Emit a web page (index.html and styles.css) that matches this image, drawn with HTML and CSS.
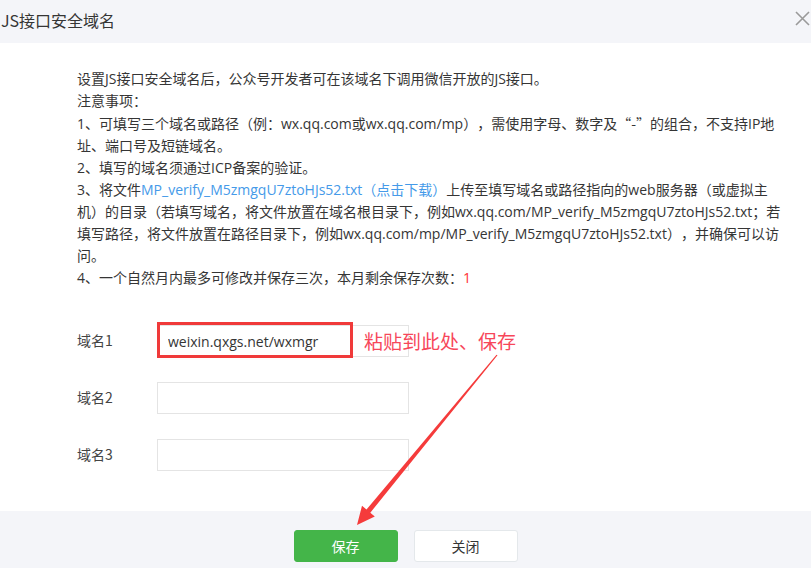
FILE: index.html
```html
<!DOCTYPE html>
<html lang="zh-CN">
<head>
<meta charset="utf-8">
<title>JS接口安全域名</title>
<link rel="stylesheet" href="styles.css">
</head>
<body>
<div class="dialog">
  <div class="dlg-head">
    <h3 class="dlg-title">JS接口安全域名</h3>
    <button class="dlg-close" type="button" aria-label="关闭">
      <svg width="15" height="15" viewBox="0 0 15 15"><path d="M1 1 L14 14 M14 1 L1 14" stroke="#9a9a9a" stroke-width="1.6" fill="none"/></svg>
    </button>
  </div>
  <div class="dlg-body">
    <div class="tips">
      <p>设置JS接口安全域名后，公众号开发者可在该域名下调用微信开放的JS接口。</p>
      <p>注意事项：</p>
      <p>1、可填写三个域名或路径（例：wx.qq.com或wx.qq.com/mp），需使用字母、数字及<span class="cjk">“-”</span>的组合，不支持IP地<br>址、端口号及短链域名。</p>
      <p>2、填写的域名须通过ICP备案的验证。</p>
      <p>3、将文件<a class="link" href="#">MP_verify_M5zmgqU7ztoHJs52.txt（点击下载）</a>上传至填写域名或路径指向的web服务器（或虚拟主<br>机）的目录（若填写域名，将文件放置在域名根目录下，例如wx.qq.com/MP_verify_M5zmgqU7ztoHJs52.txt；若<br>填写路径，将文件放置在路径目录下，例如wx.qq.com/mp/MP_verify_M5zmgqU7ztoHJs52.txt），并确保可以访<br>问。</p>
      <p>4、一个自然月内最多可修改并保存三次，本月剩余保存次数：<span class="count">1</span></p>
    </div>
    <form class="domain-form">
      <div class="form-row">
        <label class="form-label">域名1</label>
        <div class="input-box">
          <input class="form-input" type="text" value="weixin.qxgs.net/wxmgr">
          <span class="mark-box"></span>
          <span class="mark-note">粘贴到此处、保存</span>
        </div>
      </div>
      <div class="form-row">
        <label class="form-label">域名2</label>
        <div class="input-box"><input class="form-input" type="text"></div>
      </div>
      <div class="form-row">
        <label class="form-label">域名3</label>
        <div class="input-box"><input class="form-input" type="text"></div>
      </div>
    </form>
  </div>
  <div class="dlg-foot">
    <button class="btn btn-primary" type="button">保存</button>
    <button class="btn btn-default" type="button">关闭</button>
  </div>
  <svg class="mark-arrow" width="811" height="568" viewBox="0 0 811 568">
    <polygon points="497.5,355.3 370.3,512.7 374.8,516.4 357,525 362,505.8 366.5,509.5 496.5,354.7" fill="#f53b3b"/>
  </svg>
</div>
</body>
</html>
```

FILE: styles.css
```css
* { box-sizing: border-box; }
html, body { margin: 0; padding: 0; background: #fff; }
body {
  font-family: "Open Sans", "Noto Sans CJK SC", sans-serif;
  color: #353535;
  font-size: 14px;
  text-spacing-trim: space-all;
}
.dialog {
  position: relative;
  width: 811px;
  height: 568px;
  display: flex;
  flex-direction: column;
  overflow: hidden;
}
.dlg-head {
  height: 44px;
  background: #f4f5f9;
  display: flex;
  justify-content: space-between;
  align-items: flex-start;
  padding: 0 1px 0 1px;
}
.dlg-title {
  margin: 0;
  font-size: 16px;
  font-weight: normal;
  line-height: 40px;
  font-family: "Noto Sans CJK SC", sans-serif;
  color: #353535;
}
.dlg-close {
  border: 0;
  background: none;
  padding: 0;
  margin-top: 11px;
  width: 15px;
  height: 15px;
  display: block;
}
.dlg-close svg { display: block; }
.dlg-body {
  flex: 1;
  padding: 25px 20px 40px 77px;
}
.tips p { margin: 0; line-height: 22px; white-space: nowrap; }
.cjk { font-family: "Noto Sans CJK SC", sans-serif; }
.link { color: #459ae9; text-decoration: none; }
.count { color: #f33; }
.domain-form {
  margin-top: 36px;
  display: flex;
  flex-direction: column;
  gap: 25px;
}
.form-row {
  display: flex;
  align-items: center;
  height: 32px;
}
.form-label {
  width: 80px;
  font-family: "Noto Sans CJK SC", sans-serif;
  color: #444;
  line-height: 30px;
  margin-top: -2px;
}
.input-box { position: relative; }
.form-input {
  display: block;
  width: 252px;
  height: 32px;
  border: 1px solid #e4e4e4;
  padding: 0 10px;
  font-family: "Open Sans", sans-serif;
  font-size: 14px;
  color: #353535;
  outline: none;
  background: #fff;
}
.mark-box {
  position: absolute;
  left: 0;
  top: -3px;
  width: 196px;
  height: 36px;
  border: 3px solid #f03a3a;
}
.mark-note {
  position: absolute;
  left: 207px;
  top: 4px;
  white-space: nowrap;
  font-family: "Noto Sans CJK SC", sans-serif;
  font-size: 19px;
  line-height: 24px;
  color: #f7475a;
}
.dlg-foot {
  height: 57px;
  background: #f4f5f9;
  display: flex;
  justify-content: center;
  gap: 16px;
  padding-top: 19px;
}
.btn {
  width: 104px;
  height: 32px;
  border-radius: 3px;
  font-family: "Noto Sans CJK SC", sans-serif;
  font-size: 14px;
  padding: 0;
}
.btn-primary {
  background: #44b549;
  border: 1px solid #44b549;
  color: #fff;
}
.btn-default {
  background: #fff;
  border: 1px solid #e4e8eb;
  color: #353535;
}
.mark-arrow {
  position: absolute;
  left: 0;
  top: 0;
  pointer-events: none;
}
```
